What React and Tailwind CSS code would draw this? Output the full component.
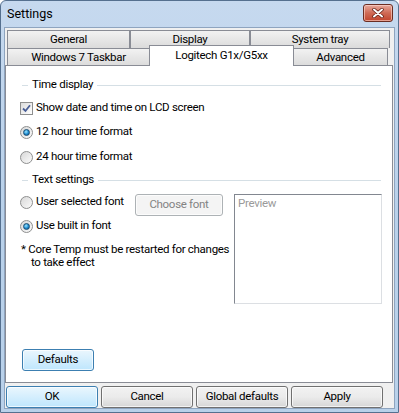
import React from "react";

const font = { fontFamily: 'Roboto, "Segoe UI", sans-serif' };

function Tab({ w, children, selected }) {
  if (selected) {
    return (
      <div
        className={`${w} relative z-10 -mx-[1px] -mt-[3px] h-[21px] bg-white border border-b-0 border-[#898c95] flex items-center justify-center text-black`}
      >
        {children}
      </div>
    );
  }
  return (
    <div
      className={`${w} h-[18px] border border-[#898c95] border-b-0 bg-gradient-to-b from-[#f2f2f2] to-[#dbdbdb] flex items-center justify-center text-black leading-none`}
    >
      {children}
    </div>
  );
}

function Radio({ checked }) {
  return (
    <span className="w-[13px] h-[13px] rounded-full border border-[#8e8f8f] bg-gradient-to-br from-[#d8d8d8] to-[#fbfbfb] flex items-center justify-center shrink-0">
      {checked && (
        <span className="w-[7px] h-[7px] rounded-full bg-[radial-gradient(circle_at_40%_35%,#9be6ff,#1c8ad0_55%,#0d4d7c)] border border-[#1a4d72]" />
      )}
    </span>
  );
}

function Check() {
  return (
    <span className="w-[13px] h-[13px] border border-[#8e8f8f] bg-gradient-to-br from-[#dcdcdc] to-[#ffffff] flex items-center justify-center shrink-0">
      <svg width="9" height="9" viewBox="0 0 9 9">
        <path d="M1 4.5 L3.5 7 L8 1.2" fill="none" stroke="#4a5f97" strokeWidth="1.8" />
      </svg>
    </span>
  );
}

function Group({ label }) {
  return (
    <div className="h-[16px] flex items-center">
      <span className="w-[6px] h-px bg-[#d5dfe5] ml-[2px]" />
      <span className="px-[4px] text-black whitespace-nowrap">{label}</span>
      <span className="flex-1 h-px bg-[#d5dfe5] mr-[11px]" />
    </div>
  );
}

function Btn({ children, w, focus, disabled }) {
  const base = focus
    ? "border-[#3c7fb1] bg-gradient-to-b from-[#eaf6fd] to-[#bee6fd]"
    : disabled
    ? "border-[#adb2b5] bg-[#f4f4f4] text-[#838383]"
    : "border-[#707070] bg-gradient-to-b from-[#f2f2f2] via-[#ebebeb] to-[#d6d6d6]";
  return (
    <div
      className={`${w} h-[22px] rounded-[3px] border ${base} flex items-center justify-center whitespace-nowrap shadow-[inset_0_0_0_1px_rgba(255,255,255,0.7)]`}
    >
      {children}
    </div>
  );
}

export default function App() {
  return (
    <div
      className="w-[399px] h-[413px] bg-gradient-to-b from-[#c6d9ef] via-[#b9d1ea] to-[#b9d1ea] border border-[#55708f] rounded-t-[6px] flex flex-col text-[11.5px] tracking-[-0.3px] text-black overflow-hidden"
      style={font}
    >
      {/* title bar */}
      <div className="h-[26px] flex items-center pl-[6px] pr-[5px] shrink-0">
        <span className="text-[12.5px] tracking-normal text-black flex-1 pt-[1px]">Settings</span>
        <div className="w-[30px] h-[18px] -mt-[3px] rounded-[3px] border border-[#6b2d22] bg-gradient-to-b from-[#e7a89c] via-[#cf6a55] to-[#c1442c] flex items-center justify-center shadow-[inset_0_0_0_1px_rgba(255,220,210,0.6)]">
          <svg width="12" height="10" viewBox="0 0 12 10">
            <path d="M2 1.5 L10 8.5 M10 1.5 L2 8.5" stroke="#5a1a10" strokeWidth="3.4" strokeLinecap="round" />
            <path d="M2 1.5 L10 8.5 M10 1.5 L2 8.5" stroke="#ffffff" strokeWidth="2" strokeLinecap="round" />
          </svg>
        </div>
      </div>

      {/* client area */}
      <div className="flex-1 mx-[3px] mb-[3px] bg-[#f0f0f0] border border-[#8ea4bf] flex flex-col pt-[2px]">
        {/* tabs */}
        <div className="pl-[2px] flex flex-col">
          <div className="flex">
            <Tab w="w-[123px]">General</Tab>
            <Tab w="w-[120px]">Display</Tab>
            <Tab w="w-[140px]">System tray</Tab>
          </div>
          <div className="flex">
            <Tab w="w-[143px]">Windows 7 Taskbar</Tab>
            <Tab w="w-[145px]" selected>
              Logitech G1x/G5xx
            </Tab>
            <Tab w="w-[95px]">Advanced</Tab>
          </div>
        </div>

        {/* panel */}
        <div className="-mt-px w-[388px] h-[318px] bg-white border border-[#898c95] flex flex-col pl-[14px] whitespace-nowrap">
          <div className="mt-[11px]">
            <Group label="Time display" />
          </div>
          <div className="mt-[3px] h-[24px] flex items-center gap-[3px]">
            <Check />
            <span>Show date and time on LCD screen</span>
          </div>
          <div className="h-[24px] flex items-center gap-[3px]">
            <Radio checked />
            <span>12 hour time format</span>
          </div>
          <div className="mt-px h-[24px] flex items-center gap-[3px]">
            <Radio />
            <span>24 hour time format</span>
          </div>
          <div className="mt-[3px]">
            <Group label="Text settings" />
          </div>
          <div className="flex">
            <div className="w-[214px] flex flex-col">
              <div className="mt-[2px] h-[24px] flex items-center">
                <div className="w-[115px] flex items-center gap-[3px]">
                  <Radio />
                  <span>User selected font</span>
                </div>
                <div className="mt-[5px]">
                  <Btn w="w-[88px]" disabled>
                    Choose font
                  </Btn>
                </div>
              </div>
              <div className="h-[24px] flex items-center gap-[3px]">
                <Radio checked />
                <span>Use built in font</span>
              </div>
              <div className="mt-[5px] leading-[13px] pl-[1px]">
                <div>* Core Temp must be restarted for changes</div>
                <div className="pl-[10px]">to take effect</div>
              </div>
            </div>
            <div className="mt-[6px] w-[148px] h-[110px] border border-[#828790] border-r-[#dcdfe3] border-b-[#dcdfe3] px-[3px] text-[#9a9a9a] leading-[16px]">
              Preview
            </div>
          </div>
          <div className="mt-auto mb-[11px] ml-[2px]">
            <Btn w="w-[72px]" focus>
              Defaults
            </Btn>
          </div>
        </div>

        {/* bottom buttons */}
        <div className="mt-[3px] flex gap-[3px] pl-[1px]">
          <Btn w="w-[92px]" focus>
            OK
          </Btn>
          <Btn w="w-[92px]">Cancel</Btn>
          <Btn w="w-[92px]">Global defaults</Btn>
          <Btn w="w-[92px]">Apply</Btn>
        </div>
      </div>
    </div>
  );
}
